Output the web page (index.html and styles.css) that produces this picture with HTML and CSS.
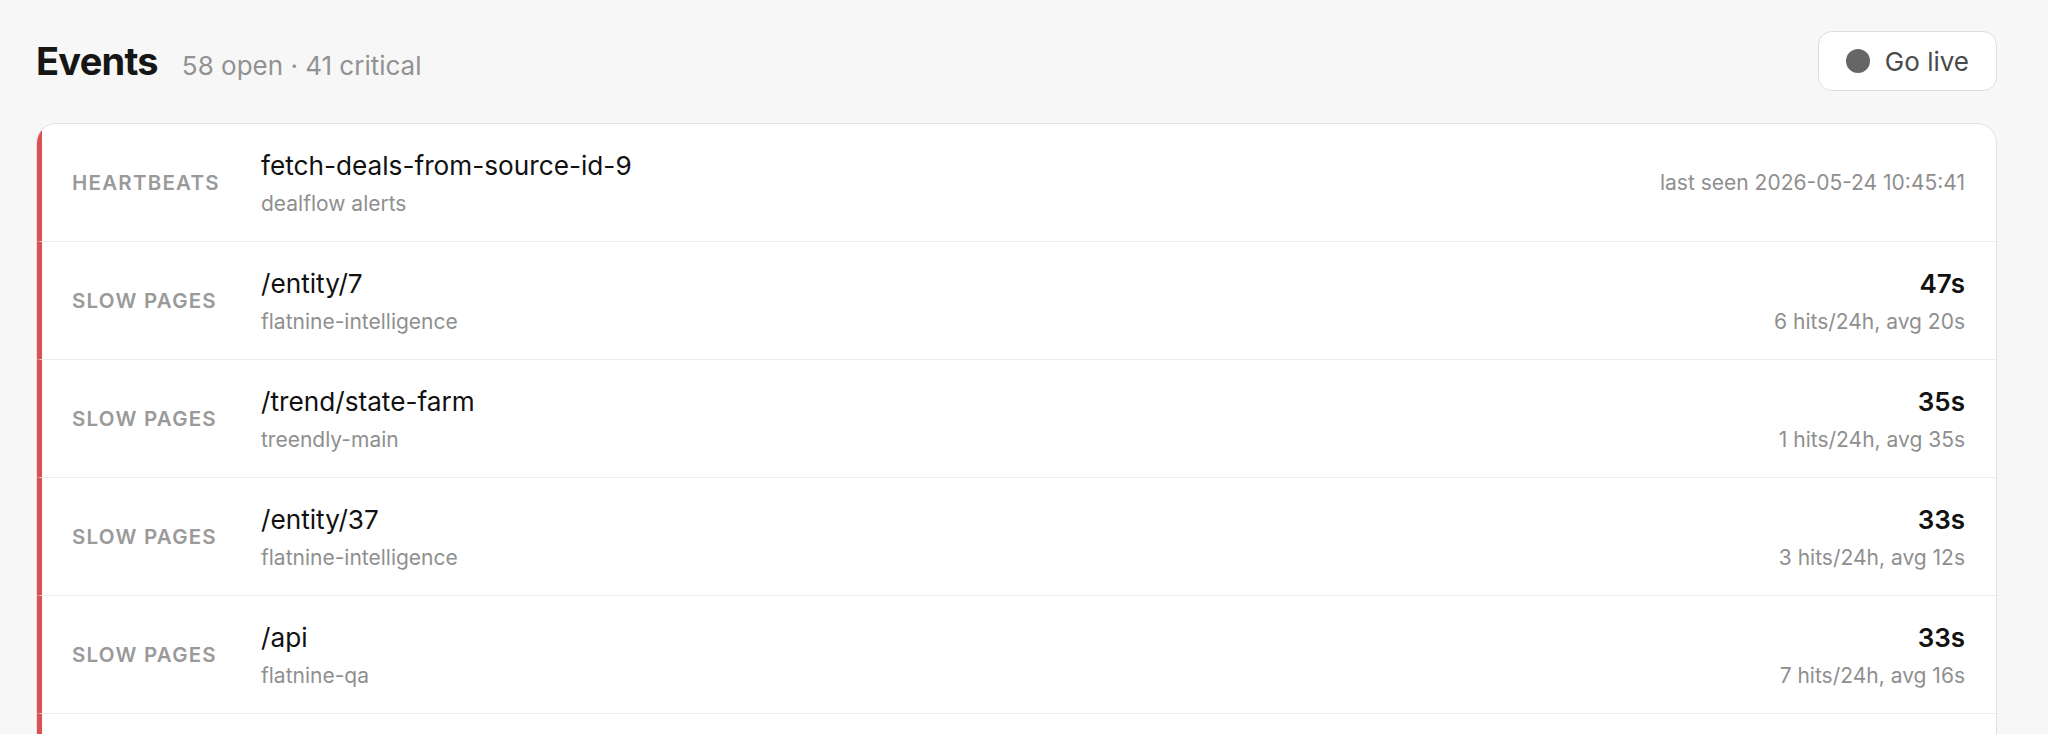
FILE: index.html
```html
<!DOCTYPE html>
<html lang="en">
<head>
<meta charset="utf-8">
<title>Events</title>
<link rel="stylesheet" href="styles.css">
</head>
<body>
<main class="page">
  <header class="page-head">
    <div class="titles">
      <h1 class="page-title">Events</h1>
      <span class="summary">58 open · 41 critical</span>
    </div>
    <button class="live-btn" type="button"><span class="live-dot"></span>Go live</button>
  </header>

  <section class="event-list">
    <div class="event">
      <div class="event-kind">Heartbeats</div>
      <div class="event-main">
        <div class="event-title">fetch-deals-from-source-id-9</div>
        <div class="event-sub">dealflow alerts</div>
      </div>
      <div class="event-meta">
        <div class="event-note">last seen 2026-05-24 10:45:41</div>
      </div>
    </div>
    <div class="event">
      <div class="event-kind">Slow pages</div>
      <div class="event-main">
        <div class="event-title">/entity/7</div>
        <div class="event-sub">flatnine-intelligence</div>
      </div>
      <div class="event-meta">
        <div class="event-value">47s</div>
        <div class="event-note">6 hits/24h, avg 20s</div>
      </div>
    </div>
    <div class="event">
      <div class="event-kind">Slow pages</div>
      <div class="event-main">
        <div class="event-title">/trend/state-farm</div>
        <div class="event-sub">treendly-main</div>
      </div>
      <div class="event-meta">
        <div class="event-value">35s</div>
        <div class="event-note">1 hits/24h, avg 35s</div>
      </div>
    </div>
    <div class="event">
      <div class="event-kind">Slow pages</div>
      <div class="event-main">
        <div class="event-title">/entity/37</div>
        <div class="event-sub">flatnine-intelligence</div>
      </div>
      <div class="event-meta">
        <div class="event-value">33s</div>
        <div class="event-note">3 hits/24h, avg 12s</div>
      </div>
    </div>
    <div class="event">
      <div class="event-kind">Slow pages</div>
      <div class="event-main">
        <div class="event-title">/api</div>
        <div class="event-sub">flatnine-qa</div>
      </div>
      <div class="event-meta">
        <div class="event-value">33s</div>
        <div class="event-note">7 hits/24h, avg 16s</div>
      </div>
    </div>
    <div class="event">
      <div class="event-kind">Slow pages</div>
      <div class="event-main">
        <div class="event-title">/entity/12</div>
        <div class="event-sub">flatnine-intelligence</div>
      </div>
      <div class="event-meta">
        <div class="event-value">31s</div>
        <div class="event-note">2 hits/24h, avg 18s</div>
      </div>
    </div>
  </section>
</main>
</body>
</html>
```

FILE: styles.css
```css
* { box-sizing: border-box; }

html, body {
  margin: 0;
  padding: 0;
  background: #f7f7f7;
}

body {
  font-family: Inter, "Noto Sans", "Liberation Sans", sans-serif;
  color: #141414;
  -webkit-font-smoothing: antialiased;
}

.page {
  padding: 31px 51px 0 36px;
}

.page-head {
  display: flex;
  align-items: center;
  justify-content: space-between;
  height: 60px;
}

.titles {
  display: flex;
  align-items: baseline;
  gap: 24px;
}

.page-title {
  margin: 0;
  font-size: 38px;
  font-weight: 700;
  letter-spacing: -0.02em;
  color: #161616;
}

.summary {
  font-size: 26px;
  color: #929292;
}

.live-btn {
  display: flex;
  align-items: center;
  gap: 15px;
  height: 60px;
  padding: 0 27px 0 27px;
  background: #fff;
  border: 1px solid #dedede;
  border-radius: 14px;
  font-family: inherit;
  font-size: 26px;
  color: #4a4a4a;
}

.live-dot {
  width: 24px;
  height: 24px;
  border-radius: 50%;
  background: #666;
}

.event-list {
  margin-top: 32px;
  background: #fff;
  border: 1px solid #e2e2e2;
  border-radius: 20px;
  overflow: hidden;
}

.event {
  display: grid;
  grid-template-columns: 160px 1fr auto;
  column-gap: 29px;
  align-items: center;
  height: 118px;
  padding: 0 31px 0 30px;
  border-left: 5px solid #dc5050;
  border-bottom: 1px solid #ececec;
}

.event-kind {
  font-size: 20.5px;
  font-weight: 600;
  letter-spacing: 0.06em;
  text-transform: uppercase;
  color: #9a9a9a;
}

.event-main {
  display: flex;
  flex-direction: column;
  gap: 8px;
}

.event-title {
  font-size: 26.2px;
  line-height: 33px;
  color: #111;
}

.event-sub {
  font-size: 21px;
  line-height: 27px;
  color: #8f8f8f;
}

.event-meta {
  display: flex;
  flex-direction: column;
  align-items: flex-end;
  gap: 8px;
}

.event-value {
  font-size: 26px;
  line-height: 33px;
  font-weight: 600;
  color: #111;
}

.event-note {
  font-size: 21px;
  line-height: 27px;
  color: #8f8f8f;
}
```
